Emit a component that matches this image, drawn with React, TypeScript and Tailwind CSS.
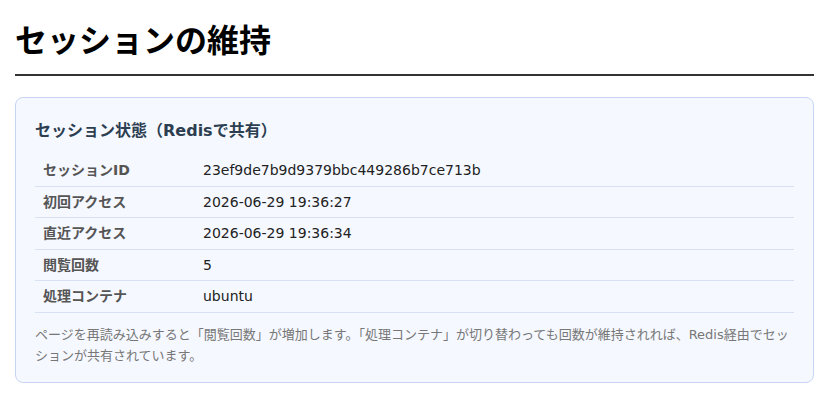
import React from 'react';

const rows = [
  { label: 'セッションID', value: '23ef9de7b9d9379bbc449286b7ce713b' },
  { label: '初回アクセス', value: '2026-06-29 19:36:27' },
  { label: '直近アクセス', value: '2026-06-29 19:36:34' },
  { label: '閲覧回数', value: '5' },
  { label: '処理コンテナ', value: 'ubuntu' },
];

const font = { fontFamily: '"DejaVu Sans", "Noto Sans CJK JP", sans-serif' };

export default function App() {
  return (
    <div className="bg-white px-[15px] pt-[18px]" style={font}>
      <h1 className="text-[32px] font-bold leading-[46px] text-black border-b-2 border-[#333] pb-[10px]">
        セッションの維持
      </h1>

      <div className="mt-[21px] border border-[#c6d6f2] bg-[#f5f8ff] rounded-lg px-[19px] pt-[21px] pb-[16px]">
        <h2 className="text-[16px] font-bold leading-[24px] text-[#2c3e50] mb-[12px]">
          セッション状態（Redisで共有）
        </h2>

        <table className="w-full border-collapse text-[14px]">
          <tbody>
            {rows.map((row) => (
              <tr key={row.label} className="border-b border-[#d6e1f4]">
                <th className="w-[160px] px-2 py-[5px] leading-[20.5px] text-left font-bold text-[#555]">
                  {row.label}
                </th>
                <td className="px-2 py-[5px] leading-[20.5px] text-[#222]">{row.value}</td>
              </tr>
            ))}
          </tbody>
        </table>

        <p className="mt-[11px] text-[13px] leading-[21px] text-[#777]">
          ページを再読み込みすると「閲覧回数」が増加します。「処理コンテナ」が切り替わっても回数が維持されれば、Redis経由でセッションが共有されています。
        </p>
      </div>
    </div>
  );
}
